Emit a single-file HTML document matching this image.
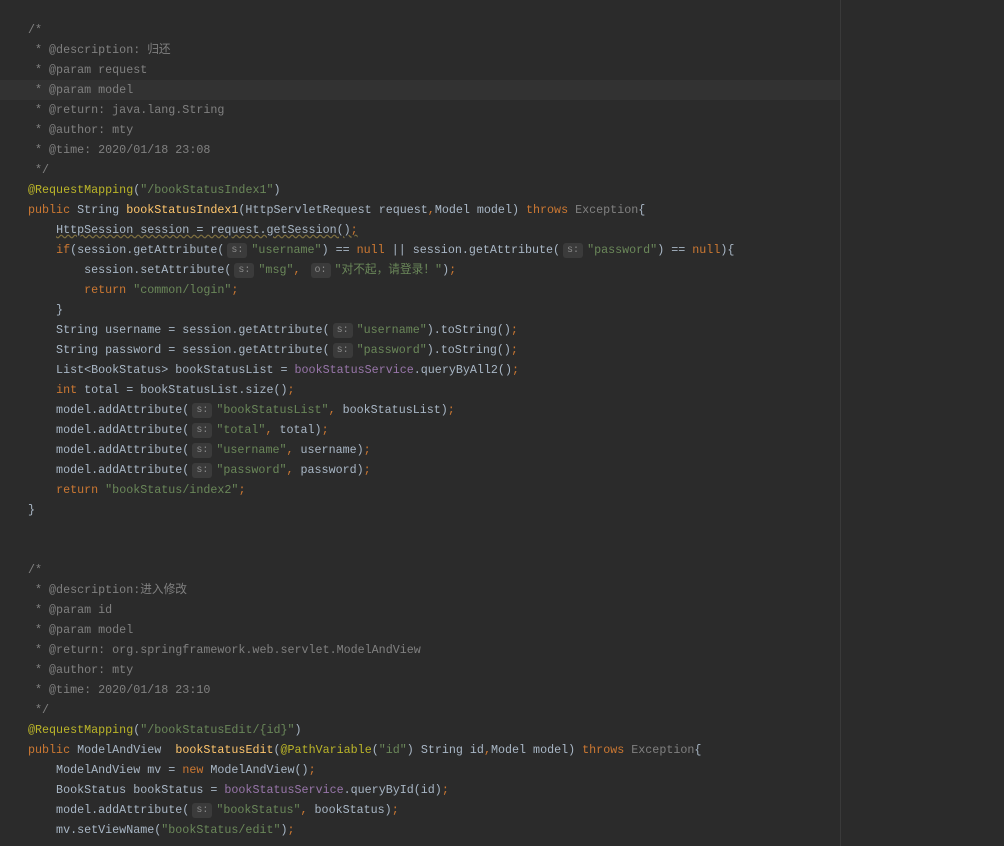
<!DOCTYPE html>
<html><head><meta charset="utf-8"><style>
html,body{margin:0;padding:0;background:#2b2b2b;width:1004px;height:846px;overflow:hidden}
.sep{position:absolute;left:840px;top:0;width:1px;height:846px;background:#3a3a3a}
.hl{position:absolute;left:0;top:80px;width:840px;height:20px;background:#323232}
pre{position:absolute;left:28px;top:20px;margin:0;font-family:"Liberation Mono","Noto Sans CJK SC",monospace;font-size:11.7px;line-height:20px;color:#a9b7c6;white-space:pre}
.c{color:#808080}.k{color:#cc7832}.s{color:#6a8759}.a{color:#bbb529}.m{color:#ffc66d}.f{color:#9876aa}
.h{display:inline-block;background:#3b3b3b;color:#8a8a8a;font-size:10px;line-height:15px;height:15px;padding:0 4px;margin:0 4px 0 3px;border-radius:3px;vertical-align:1px}
.u{text-decoration:underline wavy #807040}
</style></head><body>
<div class="hl"></div><div class="sep"></div>
<pre><span class="c">/*
 * @description: 归还
 * @param request
 * @param model
 * @return: java.lang.String
 * @author: mty
 * @time: 2020/01/18 23:08
 */</span>
<span class="a">@RequestMapping</span>(<span class="s">"/bookStatusIndex1"</span>)
<span class="k">public</span> String <span class="m">bookStatusIndex1</span>(HttpServletRequest request<span class="k">,</span>Model model) <span class="k">throws</span> <span class="c">Exception</span>{
    <span class="u">HttpSession session = request.getSession()<span class="k">;</span></span>
    <span class="k">if</span>(session.getAttribute(<span class="h">s:</span><span class="s">"username"</span>) == <span class="k">null</span> || session.getAttribute(<span class="h">s:</span><span class="s">"password"</span>) == <span class="k">null</span>){
        session.setAttribute(<span class="h">s:</span><span class="s">"msg"</span><span class="k">,</span> <span class="h">o:</span><span class="s">"对不起，请登录！"</span>)<span class="k">;</span>
        <span class="k">return</span> <span class="s">"common/login"</span><span class="k">;</span>
    }
    String username = session.getAttribute(<span class="h">s:</span><span class="s">"username"</span>).toString()<span class="k">;</span>
    String password = session.getAttribute(<span class="h">s:</span><span class="s">"password"</span>).toString()<span class="k">;</span>
    List&lt;BookStatus&gt; bookStatusList = <span class="f">bookStatusService</span>.queryByAll2()<span class="k">;</span>
    <span class="k">int</span> total = bookStatusList.size()<span class="k">;</span>
    model.addAttribute(<span class="h">s:</span><span class="s">"bookStatusList"</span><span class="k">,</span> bookStatusList)<span class="k">;</span>
    model.addAttribute(<span class="h">s:</span><span class="s">"total"</span><span class="k">,</span> total)<span class="k">;</span>
    model.addAttribute(<span class="h">s:</span><span class="s">"username"</span><span class="k">,</span> username)<span class="k">;</span>
    model.addAttribute(<span class="h">s:</span><span class="s">"password"</span><span class="k">,</span> password)<span class="k">;</span>
    <span class="k">return</span> <span class="s">"bookStatus/index2"</span><span class="k">;</span>
}


<span class="c">/*
 * @description:进入修改
 * @param id
 * @param model
 * @return: org.springframework.web.servlet.ModelAndView
 * @author: mty
 * @time: 2020/01/18 23:10
 */</span>
<span class="a">@RequestMapping</span>(<span class="s">"/bookStatusEdit/{id}"</span>)
<span class="k">public</span> ModelAndView  <span class="m">bookStatusEdit</span>(<span class="a">@PathVariable</span>(<span class="s">"id"</span>) String id<span class="k">,</span>Model model) <span class="k">throws</span> <span class="c">Exception</span>{
    ModelAndView mv = <span class="k">new</span> ModelAndView()<span class="k">;</span>
    BookStatus bookStatus = <span class="f">bookStatusService</span>.queryById(id)<span class="k">;</span>
    model.addAttribute(<span class="h">s:</span><span class="s">"bookStatus"</span><span class="k">,</span> bookStatus)<span class="k">;</span>
    mv.setViewName(<span class="s">"bookStatus/edit"</span>)<span class="k">;</span>
</pre>
</body></html>
